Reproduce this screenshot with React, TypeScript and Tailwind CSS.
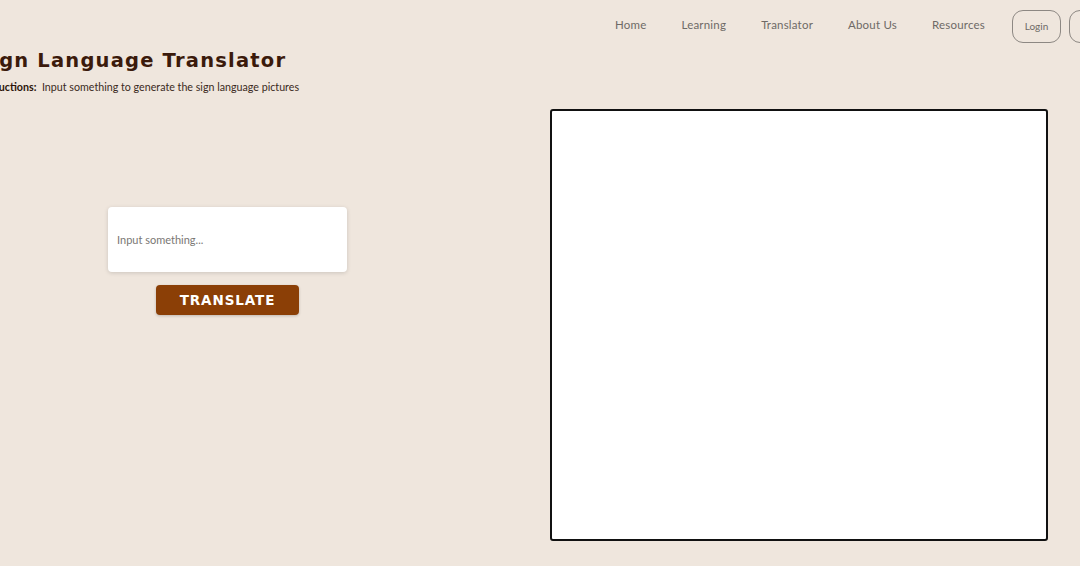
/**
 * Sign language translator page
 */

import { useState } from 'react';

const navLinks = ['Home', 'Learning', 'Translator', 'About Us', 'Resources'];

export default function App() {
  const [text, setText] = useState('');

  return (
    <div className="w-[1080px] h-[566px] overflow-hidden bg-[#efe6dd] font-['Lato',sans-serif]">
      {/* Header */}
      <header className="flex w-[1150px] h-[50px] items-center justify-end pr-[19px]">
        <nav className="flex items-center gap-[35px] mr-[27px] -mt-[1px]">
          {navLinks.map((link) => (
            <a key={link} href="#" className="text-[11.5px] text-[#6e6a66] tracking-[0.2px]">
              {link}
            </a>
          ))}
        </nav>
        <div className="flex items-center gap-[8px] mt-[3px]">
          <button className="w-[49px] h-[33px] rounded-[11px] border border-[#8d8883] text-[10px] text-[#6e6a66]">
            Login
          </button>
          <button className="w-[62px] h-[33px] rounded-[11px] border border-[#8d8883] text-[10px] text-[#6e6a66]">
            Sign Up
          </button>
        </div>
      </header>

      {/* Title */}
      <div className="-ml-[24px]">
        <h1 className="font-['DejaVu_Sans',sans-serif] font-bold text-[19.5px] leading-[22px] tracking-[1.2px] text-[#3b1a0b]">
          Sign Language Translator
        </h1>
        <p className="mt-[7px] ml-[1px] text-[10.7px] text-[#3b2a22]">
          <span className="font-bold text-[#2b1408]">Instructions:</span>&nbsp; Input something to generate the sign language pictures
        </p>
      </div>

      {/* Main */}
      <div className="flex mt-[14px]">
        <div className="w-[455px] flex flex-col items-center pt-[98px]">
          <textarea
            value={text}
            onChange={(e) => setText(e.target.value)}
            placeholder="Input something..."
            className="w-[239px] h-[65px] resize-none rounded-[4px] bg-white px-[9px] pt-[25px] text-[11px] text-[#333] placeholder:text-[#7a7774] shadow-[0_1px_4px_rgba(0,0,0,0.15)] outline-none"
          />
          <button className="mt-[13px] w-[143px] h-[30px] rounded-[4px] bg-[#8b3f06] text-white font-['DejaVu_Sans',sans-serif] font-bold text-[13.5px] tracking-[0.9px] shadow-[0_1px_3px_rgba(0,0,0,0.2)]">
            TRANSLATE
          </button>
        </div>
        <div className="ml-[95px] w-[498px] h-[432px] rounded-[3px] border-2 border-[#111] bg-white"></div>
      </div>
    </div>
  );
}
